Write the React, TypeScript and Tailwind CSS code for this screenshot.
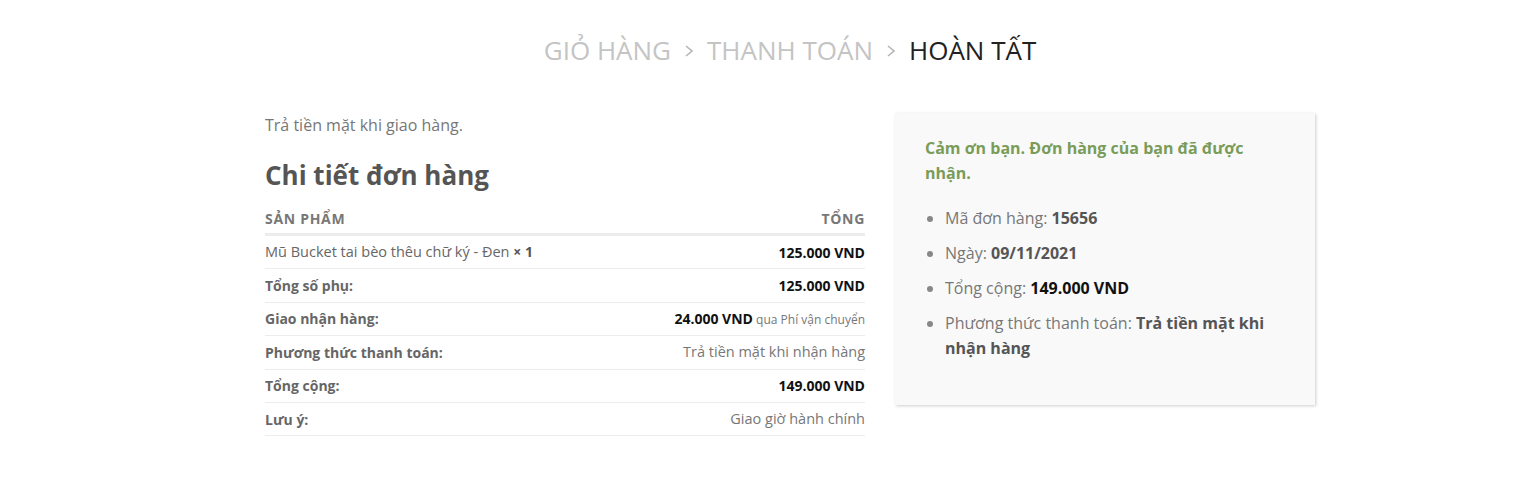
const rows = [
  { label: "Tổng số phụ:", value: <b className="font-bold text-[#111]">125.000 VND</b> },
  {
    label: "Giao nhận hàng:",
    value: (
      <span>
        <b className="font-bold text-[#111]">24.000 VND</b>
        <small className="text-[12px] text-[#777]">&nbsp;qua Phí vận chuyển</small>
      </span>
    ),
  },
  { label: "Phương thức thanh toán:", value: <span className="text-[14.5px] text-[#777]">Trả tiền mặt khi nhận hàng</span> },
  { label: "Tổng cộng:", value: <b className="font-bold text-[#111]">149.000 VND</b> },
  { label: "Lưu ý:", value: <span className="text-[14.5px] text-[#777]">Giao giờ hành chính</span> },
]

const Step = ({ text, active }: { text: string; active?: boolean }) => (
  <span className={active ? "text-[#222]" : "text-[#c4c4c4]"}>{text}</span>
)

const Arrow = () => (
  <svg width="8" height="12" viewBox="0 0 8 12" className="mx-[14px] mt-[2px]">
    <polyline points="1,1 7,6 1,11" fill="none" stroke="#b5b5b5" strokeWidth="1.6" />
  </svg>
)

const App = () => {
  return (
    <div className="min-h-[499px] bg-white font-['Open_Sans',sans-serif]">
      <div className="ml-[250px] w-[1080px]">
        <div className="flex h-[100px] items-center justify-center text-[26px] uppercase">
          <Step text="Giỏ hàng" />
          <Arrow />
          <Step text="Thanh toán" />
          <Arrow />
          <Step text="Hoàn tất" active />
        </div>

        <div className="flex pt-[12px]">
          <div className="w-[630px] px-[15px]">
            <p className="text-[16px] leading-[26px] text-[#777]">Trả tiền mặt khi giao hàng.</p>
            <h2 className="mt-[20px] text-[26px] font-bold leading-[34px] text-[#555]">Chi tiết đơn hàng</h2>

            <div className="mt-[17px] flex justify-between border-b-[3px] border-[#ececec] pb-[4px] text-[14px] font-bold uppercase leading-[20px] tracking-[0.05em] text-[#777]">
              <span>Sản phẩm</span>
              <span>Tổng</span>
            </div>
            <div className="flex h-[33.4px] items-center justify-between border-b border-[#ececec] text-[14px]">
              <span className="text-[14.5px] text-[#666]">
                Mũ Bucket tai bèo thêu chữ ký - Đen <b className="text-[14px] font-bold text-[#555]">× 1</b>
              </span>
              <b className="font-bold text-[#111]">125.000 VND</b>
            </div>
            {rows.map((r) => (
              <div key={r.label} className="flex h-[33.4px] items-center justify-between border-b border-[#ececec] text-[14px]">
                <span className="font-bold text-[#666]">{r.label}</span>
                {r.value}
              </div>
            ))}
          </div>

          <div className="w-[450px] px-[15px]">
            <div className="mt-[1px] bg-[#f9f9f9] px-[30px] pt-[23px] pb-[44px] shadow-[1px_1px_3px_rgba(0,0,0,0.2)]">
              <p className="text-[16px] font-bold leading-[25px] text-[#7a9c59]">
                Cảm ơn bạn. Đơn hàng của bạn đã được nhận.
              </p>
              <ul className="mt-[20px] flex list-disc flex-col gap-[10px] pl-[20px] text-[16px] leading-[25px] text-[#777] marker:text-[#888]">
                <li>
                  Mã đơn hàng: <b className="font-bold text-[#555]">15656</b>
                </li>
                <li>
                  Ngày: <b className="font-bold text-[#555]">09/11/2021</b>
                </li>
                <li>
                  Tổng cộng: <b className="font-bold text-[#111]">149.000 VND</b>
                </li>
                <li>
                  Phương thức thanh toán: <b className="font-bold text-[#555]">Trả tiền mặt khi nhận hàng</b>
                </li>
              </ul>
            </div>
          </div>
        </div>
      </div>
    </div>
  )
}

export default App
